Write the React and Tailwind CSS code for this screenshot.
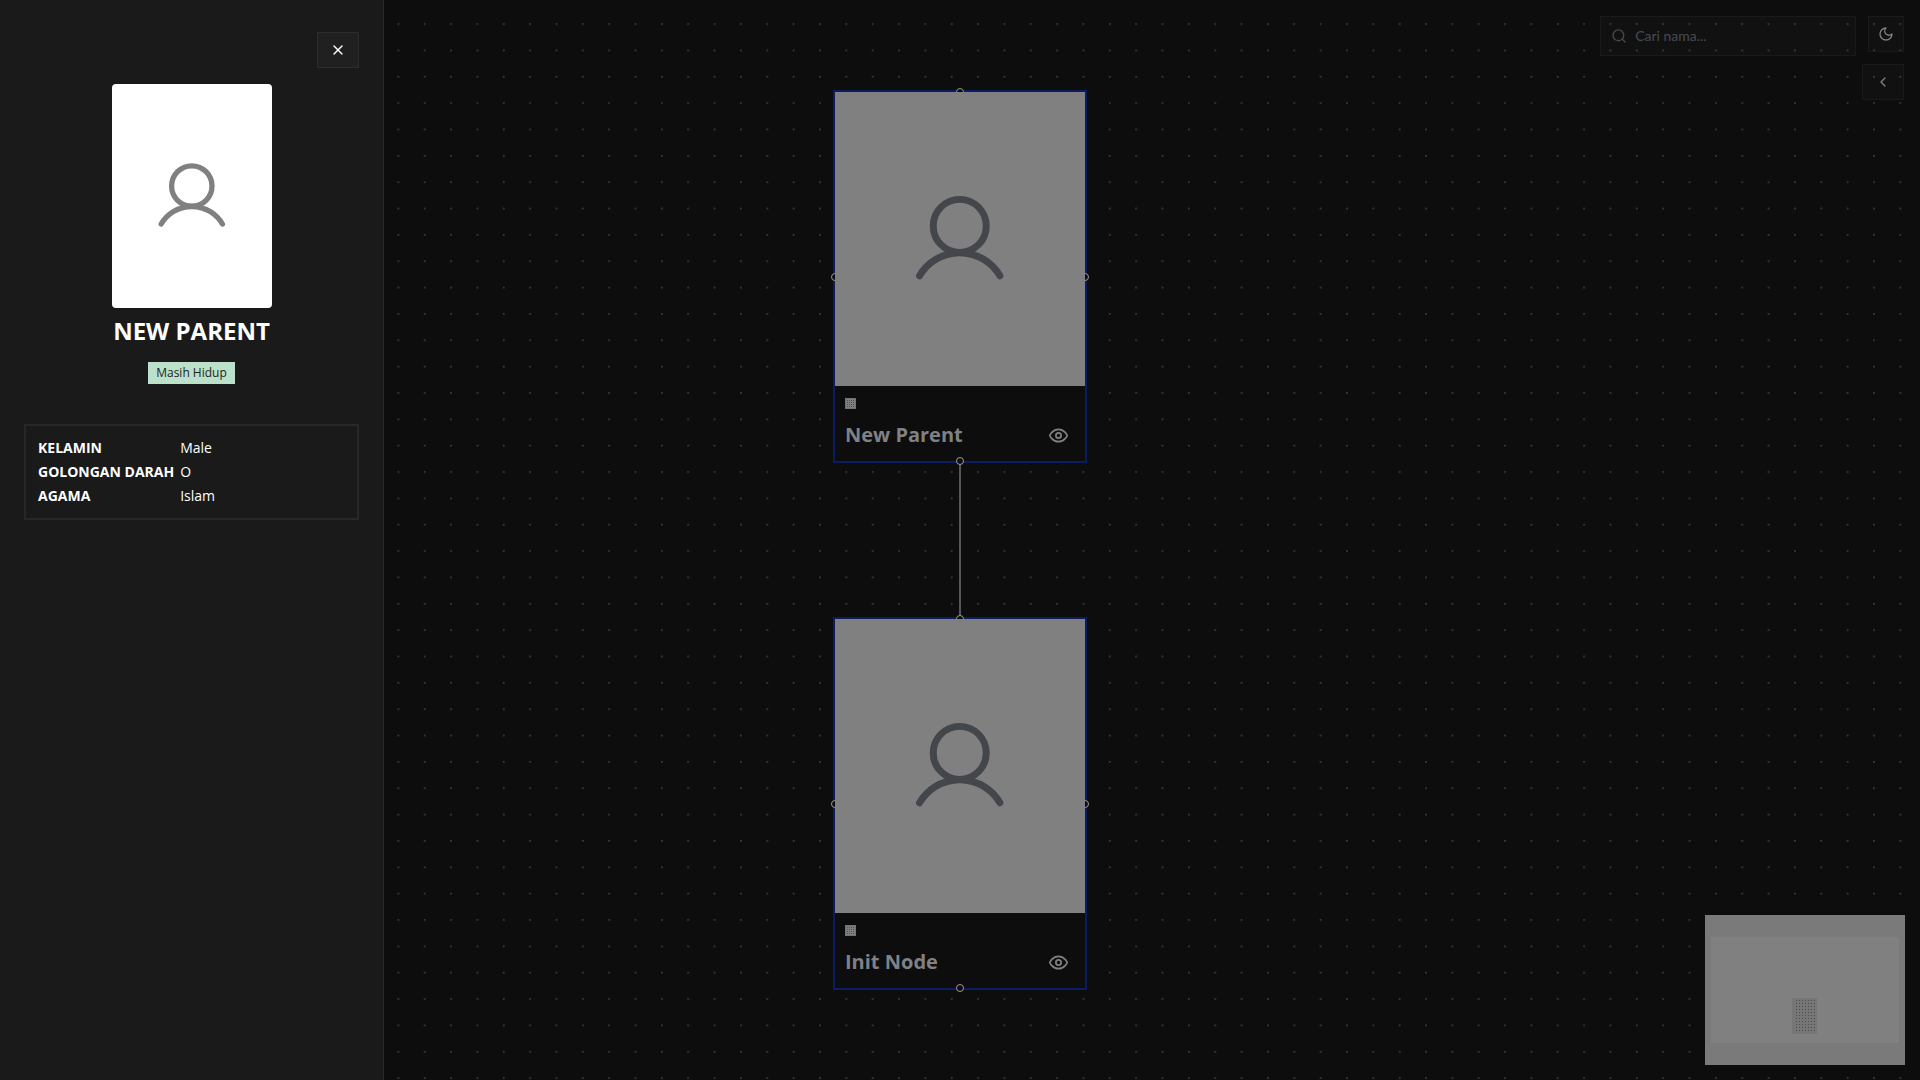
import { useState } from "react";
import { ChevronLeft, Search, X } from "lucide-react";

const people = [
  { id: "parent", name: "New Parent", position: "top-[90px]" },
  { id: "init", name: "Init Node", position: "top-[617px]" },
];

const details = [
  { label: "KELAMIN", value: "Male" },
  { label: "GOLONGAN DARAH", value: "O" },
  { label: "AGAMA", value: "Islam" },
];

const PersonIcon = ({ className }) => (
  <svg viewBox="0 0 96 96" fill="none" stroke="currentColor" strokeWidth="5.3" strokeLinecap="round" className={className}>
    <circle cx="47.8" cy="38" r="20.2" />
    <path d="M17.2 76a35.5 35.5 0 0 1 61.2 0" />
  </svg>
);

const EyeIcon = ({ className }) => (
  <svg viewBox="0 0 24 24" fill="none" stroke="currentColor" strokeWidth="2" strokeLinecap="round" strokeLinejoin="round" className={className}>
    <path d="M2 12s3-7 10-7 10 7 10 7-3 7-10 7-10-7-10-7Z" />
    <circle cx="12" cy="12" r="3" />
  </svg>
);

const MoonIcon = ({ className }) => (
  <svg viewBox="0 0 24 24" fill="none" stroke="currentColor" strokeWidth="2" strokeLinecap="round" strokeLinejoin="round" className={className}>
    <path d="M12 3a6 6 0 0 0 9 9 9 9 0 1 1-9-9Z" />
  </svg>
);

const DotGrid = () => (
  <svg className="absolute inset-0 h-full w-full" aria-hidden="true">
    <pattern id="dots" x="2.2" y="23.2" width="26.35" height="26.35" patternUnits="userSpaceOnUse">
      <circle cx="0.9" cy="0.9" r="0.8" fill="#505153" />
    </pattern>
    <rect width="100%" height="100%" fill="url(#dots)" />
  </svg>
);

const Handle = ({ className }) => (
  <span className={`absolute size-2 rounded-full border border-[#9a9a9a] bg-[#0d0d0d] ${className}`} />
);

const PersonNode = ({ id, name, position }) => (
  <article className={`absolute left-1/2 w-[254px] -translate-x-1/2 border-2 border-[#0a1d63] bg-[#0d0d0d] ${position}`}>
    <Handle className="-top-1 left-1/2 -translate-x-1/2" />
    <Handle className="-left-1 top-1/2 -translate-y-1/2" />
    <Handle className="-right-1 top-1/2 -translate-y-1/2" />
    <Handle className="-bottom-1 left-1/2 -translate-x-1/2" />
    <div className="relative flex h-[294px] items-center justify-center bg-[#808080]">
      <PersonIcon className="size-[126px] text-[#43464a]" />
    </div>
    <div className="flex flex-col gap-3 py-3 pl-2.5 pr-4">
      <svg className="size-[11px]" viewBox="0 0 11 11" aria-hidden="true">
        <pattern id={`hatch-${id}`} width="2" height="2" patternUnits="userSpaceOnUse">
          <rect width="2" height="2" fill="#808080" />
          <rect width="1" height="1" fill="#4e5054" />
        </pattern>
        <rect x="0.5" y="0.5" width="10" height="10" fill={`url(#hatch-${id})`} stroke="#707274" />
      </svg>
      <div className="flex h-7 items-center justify-between">
        <h2 className="text-xl font-bold leading-7 text-[#808186]">{name}</h2>
        <button type="button" aria-label={`Lihat ${name}`} className="text-[#808080]">
          <EyeIcon className="size-[21px]" />
        </button>
      </div>
    </div>
  </article>
);

const MiniMap = () => (
  <svg className="absolute bottom-[15px] right-[15px] h-[150px] w-[200px]" viewBox="0 0 200 150" aria-hidden="true">
    <pattern id="speck" width="3" height="3" patternUnits="userSpaceOnUse">
      <rect x="1" y="1" width="1" height="1" fill="#4c4d4e" />
    </pattern>
    <rect width="200" height="150" fill="#7a7a7a" />
    <rect x="6" y="22" width="188" height="106" fill="#808080" />
    <rect x="87" y="83" width="25" height="36" rx="1" fill="#767676" />
    <rect x="89" y="84" width="21" height="34" fill="url(#speck)" />
  </svg>
);

const Toolbar = ({ query, onQueryChange }) => (
  <div className="absolute right-4 top-4 flex flex-col items-end gap-2">
    <div className="flex h-10 items-start gap-3">
      <label className="flex h-10 w-64 items-center gap-2 border border-[#1a1a1a] bg-white/2 px-2.5 text-[#48494c]">
        <Search size={18} />
        <input
          type="text"
          aria-label="Cari nama"
          placeholder="Cari nama..."
          value={query}
          onChange={(e) => onQueryChange(e.target.value)}
          className="w-full bg-transparent font-['Lato',sans-serif] text-sm outline-none placeholder:text-[#474a54]"
        />
      </label>
      <button type="button" aria-label="Ganti tema" className="flex size-9 items-center justify-center border border-[#1a1a1a] bg-white/2 text-[#808080]">
        <MoonIcon className="size-4" />
      </button>
    </div>
    <button type="button" aria-label="Buka menu" className="flex h-9 w-[42px] items-center justify-center border border-[#1a1a1a] bg-white/2 text-[#808080]">
      <ChevronLeft size={16} />
    </button>
  </div>
);

const DetailPanel = ({ onClose }) => (
  <aside className="relative flex min-h-screen w-96 flex-col border-r border-[#2a2a2a] bg-[#1a1a1a] px-6 py-8 text-white">
    <button
      type="button"
      aria-label="Tutup"
      onClick={onClose}
      className="flex h-9 w-[42px] items-center justify-center self-end border border-[#2c2c2c] bg-[#202020]"
    >
      <X size={16} />
    </button>

    <div className="mt-4 flex flex-col items-center">
      <div className="flex h-56 w-40 items-center justify-center rounded bg-white">
        <PersonIcon className="size-24 text-[#808080]" />
      </div>
      <h1 className="mt-2 text-2xl font-bold leading-[30px]">NEW PARENT</h1>
      <span className="mt-4 bg-[#bbe1cb] px-2 text-xs font-medium leading-[22px] text-[#1d2521]">Masih Hidup</span>
    </div>

    <div className="mt-10 border-2 border-[#282828] px-3 py-2.5">
      <table className="text-left text-sm">
        <tbody>
          {details.map(({ label, value }) => (
            <tr key={label} className="h-6">
              <th scope="row" className="p-0 pr-1.5 font-bold">{label}</th>
              <td className="p-0">{value}</td>
            </tr>
          ))}
        </tbody>
      </table>
    </div>
  </aside>
);

const App = () => {
  const [query, setQuery] = useState("");
  const [panelOpen, setPanelOpen] = useState(true);

  return (
    <div className="relative min-h-screen overflow-hidden bg-[#0d0d0d] font-['Open_Sans','Noto_Sans',sans-serif]">
      {/* Family tree canvas */}
      <main className="absolute inset-0">
        <DotGrid />
        <span className="absolute left-1/2 top-[463px] h-[154px] w-0.5 -translate-x-1/2 bg-[#55585b]" />
        {people.map((person) => (
          <PersonNode key={person.id} {...person} />
        ))}
        <MiniMap />
        <Toolbar query={query} onQueryChange={setQuery} />
      </main>

      {panelOpen && <DetailPanel onClose={() => setPanelOpen(false)} />}
    </div>
  );
};

export default App;
